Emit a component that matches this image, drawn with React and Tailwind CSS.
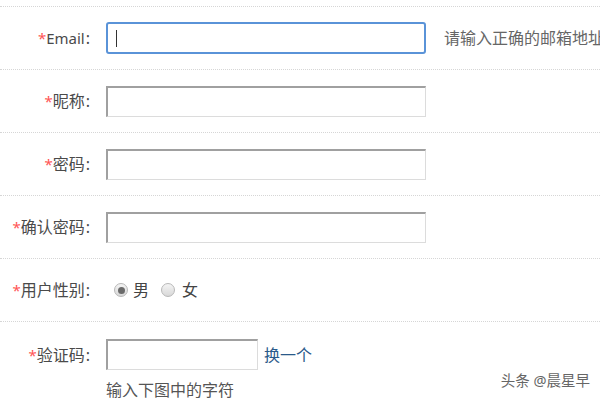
import React from "react";

const font = { fontFamily: '"Noto Sans", "Noto Sans CJK SC", sans-serif' };

function Label({ children }) {
  return (
    <div className="w-[90px] shrink-0 text-right text-[16px] text-[#4a4a4a] leading-none whitespace-nowrap">
      <span className="text-[#f55] text-[15px]">*</span>
      {children}
      <span className="ml-[1px]">:</span>
    </div>
  );
}

function Input({ focused, w = "w-[320px]" }) {
  if (focused) {
    return (
      <div className={`${w} shrink-0 h-[32px] rounded-[3px] border-[2px] border-[#5a93d8] bg-white flex items-center pl-[8px]`}>
        <div className="w-[1px] h-[17px] bg-[#333]" />
      </div>
    );
  }
  return (
    <div
      className={`${w} shrink-0 h-[31px] bg-white border-t-[2px] border-l-[2px] border-b border-r border-t-[#a0a0a0] border-l-[#a0a0a0] border-b-[#dcdcdc] border-r-[#dcdcdc]`}
    />
  );
}

function Row({ label, children, extra }) {
  return (
    <div className="h-[63px] border-b border-dotted border-[#d6d6d6] flex items-center gap-[16px]">
      <Label>{label}</Label>
      {children}
      {extra}
    </div>
  );
}

function Radio({ checked }) {
  return (
    <div className="w-[14px] h-[14px] rounded-full border border-[#b8b8b8] bg-gradient-to-b from-[#f4f4f4] to-[#d8d8d8] flex items-center justify-center">
      {checked && <div className="w-[7px] h-[7px] rounded-full bg-[#6a6a6a]" />}
    </div>
  );
}

export default function App() {
  return (
    <div className="w-[600px] h-[400px] bg-white overflow-hidden relative" style={font}>
      <div className="h-[7px] border-b border-dotted border-[#d6d6d6]" />
      <Row
        label={<span className="text-[15px]">Email</span>}
        extra={<span className="ml-[2px] shrink-0 text-[16px] text-[#666] whitespace-nowrap">请输入正确的邮箱地址</span>}
      >
        <Input focused />
      </Row>
      <Row label="昵称">
        <Input />
      </Row>
      <Row label="密码">
        <Input />
      </Row>
      <Row label="确认密码">
        <Input />
      </Row>
      <Row label="用户性别">
        <div className="flex items-center text-[16px] text-[#444] pl-[8px]">
          <Radio checked />
          <span className="ml-[5px]">男</span>
          <div className="ml-[12px]">
            <Radio />
          </div>
          <span className="ml-[7px]">女</span>
        </div>
      </Row>
      <div className="flex gap-[16px] pt-[17px]">
        <div className="pt-[8px]">
          <Label>验证码</Label>
        </div>
        <div className="flex flex-col">
          <div className="flex items-center gap-[6px]">
            <Input w="w-[152px]" />
            <span className="text-[16px] text-[#2a5a8a]">换一个</span>
          </div>
          <span className="mt-[12px] text-[16px] text-[#555] leading-none">输入下图中的字符</span>
        </div>
      </div>
      <div
        className="absolute right-[10px] bottom-[13px] text-[14.5px] text-[#666] leading-none"
        style={{ textShadow: "0 0 2px #fff, 1px 1px 1px #fff" }}
      >
        头条 @晨星早
      </div>
    </div>
  );
}
